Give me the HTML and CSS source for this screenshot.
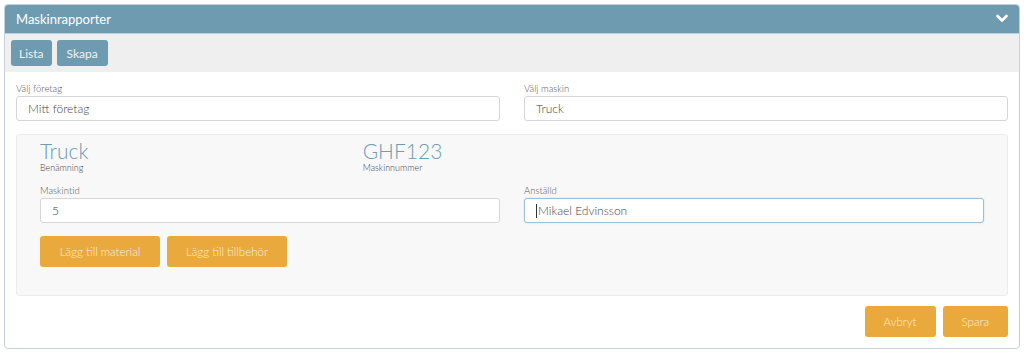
FILE: index.html
```html
<!DOCTYPE html>
<html lang="sv">
<head>
    <title>Maskinrapporter</title>
    <link rel="stylesheet" href="styles.css">
</head>
<body>
    <div class="panel">
        <div class="panel-head">
            <span>Maskinrapporter</span>
            <svg class="chevron" width="12" height="9" viewBox="0 0 12 9"><path d="M1.5 2 L6 6.5 L10.5 2" fill="none" stroke="#fff" stroke-width="2.6" stroke-linecap="round" stroke-linejoin="round"/></svg>
        </div>
        <div class="toolbar">
            <button class="btn-blue">Lista</button>
            <button class="btn-blue">Skapa</button>
        </div>
        <div class="panel-body">
            <div class="row">
                <div class="field">
                    <label>Välj företag</label>
                    <div class="input">Mitt företag</div>
                </div>
                <div class="field">
                    <label>Välj maskin</label>
                    <div class="input">Truck</div>
                </div>
            </div>

            <div class="card">
                <div class="info">
                    <div>
                        <div class="big">Truck</div>
                        <div class="small">Benämning</div>
                    </div>
                    <div>
                        <div class="big">GHF123</div>
                        <div class="small">Maskinnummer</div>
                    </div>
                </div>
                <div class="row">
                    <div class="field">
                        <label>Maskintid</label>
                        <div class="input">5</div>
                    </div>
                    <div class="field">
                        <label>Anställd</label>
                        <div class="input focus"><span class="caret"></span>Mikael Edvinsson</div>
                    </div>
                </div>
                <div class="actions">
                    <button class="btn-orange wide">Lägg till material</button>
                    <button class="btn-orange wide">Lägg till tillbehör</button>
                </div>
            </div>

            <div class="footer">
                <button class="btn-orange">Avbryt</button>
                <button class="btn-orange">Spara</button>
            </div>
        </div>
    </div>
</body>
</html>
```

FILE: styles.css
```css
*{
    margin: 0;
    box-sizing: border-box;
}
body{
    margin: 4px;
    background-color: #fff;
    font-family: 'Lato', 'Noto Sans', sans-serif;
    font-weight: 300;
    color: #555;
}

.panel{
    width: 1016px;
    border: 1px solid #c4d0d8;
    border-radius: 4px;
    overflow: hidden;
}
.panel-head{
    height: 29px;
    background-color: #6f9bb0;
    color: #fff;
    font-size: 13px;
    font-weight: 400;
    display: flex;
    align-items: center;
    justify-content: space-between;
    padding: 0 11px 0 11px;
    border-bottom: 1px solid #b9d1dd;
}
.chevron{
    margin-top: -2px;
}
.toolbar{
    background-color: #efefef;
    height: 38px;
    padding: 6px 6px;
    display: flex;
    gap: 5px;
}
button{
    font-family: 'Lato', 'Noto Sans', sans-serif;
    font-weight: 400;
    border: none;
    cursor: pointer;
}
.btn-blue{
    height: 26px;
    padding: 0 8px;
    background-color: #6f9bb0;
    color: #eef3f5;
    font-size: 12px;
    border-radius: 3px;
}
.btn-blue + .btn-blue{
    padding: 0 10px;
}

.panel-body{
    padding: 10px 11px 11px 11px;
}
.row{
    display: grid;
    grid-template-columns: 1fr 1fr;
    gap: 24px;
}
label{
    display: block;
    font-size: 9.5px;
    line-height: 14px;
    color: #555;
}
.input{
    height: 25px;
    border: 1px solid #d6d6d6;
    border-radius: 3px;
    background-color: #fff;
    font-size: 12px;
    color: #444;
    padding-left: 11px;
    display: flex;
    align-items: center;
}
.input.focus{
    border-color: #9dbfd5;
    box-shadow: 0 0 2px #c5dbe8;
}
.caret{
    width: 1px;
    height: 14px;
    background-color: #333;
    margin-right: 1px;
}

.card{
    margin-top: 13px;
    background-color: #f8f8f9;
    border: 1px solid #ececec;
    border-radius: 3px;
    padding: 4px 23px 28px 23px;
}
.info{
    display: grid;
    grid-template-columns: 1fr 1fr 1fr;
    gap: 24px;
    margin-bottom: 11px;
}
.big{
    font-size: 21px;
    line-height: 24px;
    color: #6f9bb0;
}
.small{
    font-size: 9px;
    line-height: 10px;
    color: #444;
}
.actions{
    margin-top: 13px;
    display: flex;
    gap: 7px;
}
.btn-orange{
    height: 31px;
    background-color: #eaa93c;
    color: #fbefd9;
    font-size: 11.5px;
    font-weight: 300;
    border-radius: 3px;
    padding: 0 19px;
}
.btn-orange.wide{
    width: 120px;
    padding: 0;
}
.footer{
    margin-top: 10px;
    display: flex;
    justify-content: flex-end;
    gap: 7px;
}
```
